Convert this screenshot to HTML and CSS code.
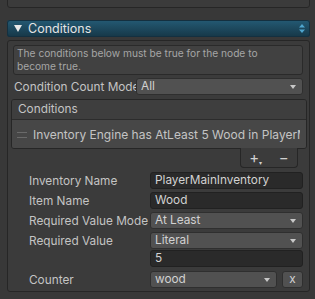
FILE: index.html
```html
<!DOCTYPE html>
<html lang="en">
<head>
  <meta charset="UTF-8" />
  <title>Conditions</title>
  <link rel="stylesheet" href="styles.css">
</head>
<body>
  <div class="prev-box"></div>

  <div class="foldout">
    <span class="fold-arrow"></span>
    <span class="fold-title">Conditions</span>
    <svg class="fold-sort" width="6" height="9" viewBox="0 0 6 9">
      <path d="M3 0 L6 3.5 H0 Z M3 9 L6 5.5 H0 Z" fill="#4fa6cf"/>
    </svg>
  </div>

  <div class="panel">
    <div class="helpbox">The conditions below must be true for the node to<br>become true.</div>

    <div class="row row-top">
      <span class="label label-narrow">Condition Count Mode</span>
      <div class="dropdown">All</div>
    </div>

    <div class="list">
      <div class="list-header">Conditions</div>
      <div class="list-item">
        <span class="handle"></span>
        <span class="item-text">Inventory Engine has AtLeast 5 Wood in PlayerMainInventory</span>
      </div>
    </div>
    <div class="list-footer">
      <span class="add">+<small>▾</small></span>
      <span class="remove">−</span>
    </div>

    <div class="fields">
      <div class="row">
        <span class="label">Inventory Name</span>
        <div class="textfield">PlayerMainInventory</div>
      </div>
      <div class="row">
        <span class="label">Item Name</span>
        <div class="textfield">Wood</div>
      </div>
      <div class="row">
        <span class="label">Required Value Mode</span>
        <div class="dropdown">At Least</div>
      </div>
      <div class="row">
        <span class="label">Required Value</span>
        <div class="dropdown">Literal</div>
      </div>
      <div class="row row-tight">
        <span class="label"></span>
        <div class="textfield">5</div>
      </div>
      <div class="row">
        <span class="label">Counter</span>
        <div class="dropdown">wood</div>
        <div class="small-btn">x</div>
      </div>
    </div>
  </div>
</body>
</html>
```

FILE: styles.css
```css
body {
  margin: 0;
  width: 315px;
  height: 299px;
  overflow: hidden;
  background-color: #383838;
  color: #c4c4c4;
  font-family: Inter, 'Noto Sans', sans-serif;
  font-size: 11.8px;
}
.prev-box {
  margin: -5px 0 0 7px;
  width: 301px;
  height: 11px;
  border: 1px solid #262626;
  border-radius: 3px;
  background-color: #3b3b3b;
}
.foldout {
  margin: 12px 0 0 7px;
  width: 291px;
  height: 17px;
  padding: 0 5px 0 7px;
  display: flex;
  align-items: center;
  border-radius: 3px;
  background: linear-gradient(#245a74, #163747);
  box-shadow: inset 0 0 0 1px #143040;
  color: #e4e4e4;
  font-size: 12.5px;
}
.fold-arrow {
  width: 0;
  height: 0;
  border-left: 4px solid transparent;
  border-right: 4px solid transparent;
  border-top: 7px solid #e8e8e8;
  margin-right: 6px;
}
.fold-title {
  flex: 1;
}
.panel {
  margin: 3px 0 0 7px;
  width: 301px;
  height: 250px;
  border: 1px solid #262626;
  border-radius: 3px;
  background-color: #3b3b3b;
  display: flex;
  flex-direction: column;
}
.helpbox {
  margin: 4px 0 0 5px;
  width: 282px;
  height: 27px;
  padding: 1px 3px;
  border: 1px solid #2a2a2a;
  border-radius: 3px;
  background-color: #414141;
  color: #a6a6a6;
  font-size: 10.2px;
  line-height: 12.5px;
  white-space: nowrap;
}
.row {
  display: flex;
  align-items: center;
  height: 17px;
  margin-bottom: 3px;
}
.row-top {
  margin: 3px 0 4px 6px;
}
.label {
  width: 121px;
  flex: none;
  white-space: nowrap;
  overflow: hidden;
}
.label-narrow {
  width: 122px;
}
.dropdown, .textfield {
  flex: 1;
  min-width: 0;
  height: 15px;
  line-height: 15px;
  padding: 0 4px;
  border-radius: 3px;
  white-space: nowrap;
  overflow: hidden;
  position: relative;
}
.dropdown {
  background-color: #515151;
  border: 1px solid #2f2f2f;
  color: #d2d2d2;
  margin-right: 6px;
}
.dropdown::after {
  content: '';
  position: absolute;
  right: 6px;
  top: 6px;
  border-left: 3.5px solid transparent;
  border-right: 3.5px solid transparent;
  border-top: 4px solid #c8c8c8;
}
.textfield {
  background-color: #2a2a2a;
  border: 1px solid #212121;
  color: #d2d2d2;
  margin-right: 6px;
}
.list {
  margin: 0 0 0 3px;
  width: 294px;
  border: 1px solid #262626;
  border-radius: 3px;
  overflow: hidden;
}
.list-header {
  height: 19px;
  line-height: 19px;
  padding-left: 6px;
  background-color: #3e3e3e;
  border-bottom: 1px solid #2c2c2c;
}
.list-item {
  height: 29px;
  display: flex;
  align-items: center;
  padding-right: 6px;
  background-color: #474747;
  font-size: 12px;
  white-space: nowrap;
  overflow: hidden;
}
.handle {
  flex: none;
  width: 10px;
  height: 4px;
  margin: 0 6px 0 5px;
  border-top: 1px solid #6a6a6a;
  border-bottom: 1px solid #6a6a6a;
}
.item-text {
  overflow: hidden;
}
.list-footer {
  margin: -1px 0 0 232px;
  width: 56px;
  height: 19px;
  display: flex;
  align-items: center;
  justify-content: space-around;
  border: 1px solid #262626;
  border-top: none;
  border-radius: 0 0 4px 4px;
  background-color: #3b3b3b;
  color: #d0d0d0;
  font-size: 15px;
}
.add small {
  font-size: 6px;
  vertical-align: -2px;
}
.fields {
  margin: 4px 0 0 21px;
}
.row-tight {
  margin-top: -2px;
  margin-bottom: 4px;
}
.small-btn {
  flex: none;
  width: 19px;
  height: 15px;
  line-height: 14px;
  margin-right: 6px;
  text-align: center;
  background-color: #515151;
  border: 1px solid #2f2f2f;
  border-radius: 3px;
  color: #d2d2d2;
}
.row .dropdown + .small-btn {
  margin-left: -1px;
}
```
